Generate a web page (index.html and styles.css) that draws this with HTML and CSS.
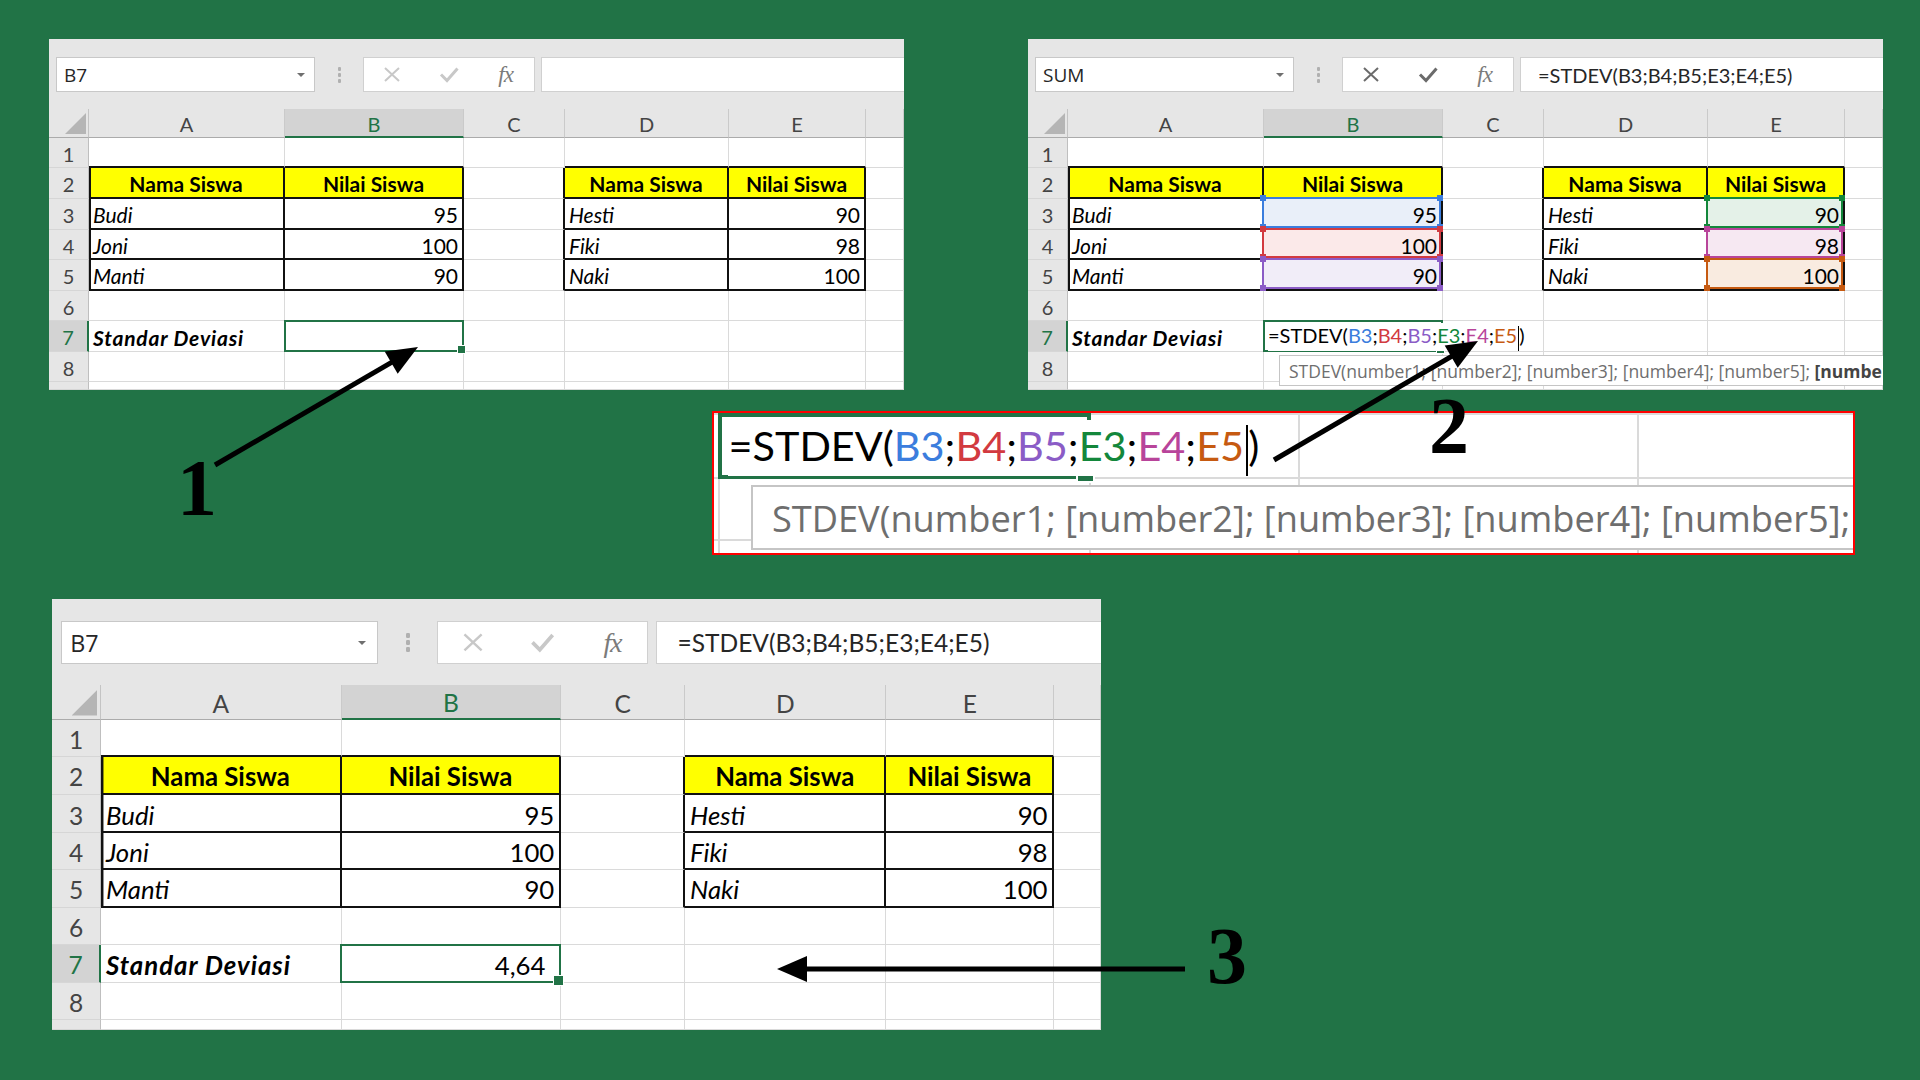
FILE: index.html
```html
<!DOCTYPE html>
<html lang="id">
<head>
<meta charset="utf-8">
<title>STDEV Excel</title>
<link rel="stylesheet" href="styles.css">
</head>
<body>
<div class="top">
  <!-- Panel 1 -->
  <div class="panel">
    <div class="toolbar">
      <div class="namebox"><span>B7</span><i class="dd"></i></div>
      <div class="dots"><i></i><i></i><i></i></div>
      <div class="fxgroup">
        <svg width="18" height="17" viewBox="0 0 18 17"><path class="ico" d="M2 2L16 15M16 2L2 15" stroke-width="2"/></svg>
        <svg width="20" height="17" viewBox="0 0 20 17"><path class="ico" d="M2 8.5l6 6L18.5 2.5" stroke-width="3"/></svg>
        <span class="fx">fx</span>
      </div>
      <div class="fbar"></div>
    </div>
    <div class="sheet">
      <div class="corner"></div><div class="ch">A</div><div class="ch csel">B</div><div class="ch">C</div><div class="ch">D</div><div class="ch">E</div><div class="ch"></div>
      <div class="rh">1</div><div class="ab"></div><div class="ab"></div><div></div><div class="ab"></div><div class="ab"></div><div></div>
      <div class="rh">2</div><div class="t hd bl">Nama Siswa</div><div class="t hd">Nilai Siswa</div><div class="ar"></div><div class="t hd">Nama Siswa</div><div class="t hd">Nilai Siswa</div><div></div>
      <div class="rh">3</div><div class="t nm bl">Budi</div><div class="t num">95</div><div class="ar"></div><div class="t nm">Hesti</div><div class="t num">90</div><div></div>
      <div class="rh">4</div><div class="t nm bl">Joni</div><div class="t num">100</div><div class="ar"></div><div class="t nm">Fiki</div><div class="t num">98</div><div></div>
      <div class="rh">5</div><div class="t nm bl">Manti</div><div class="t num">90</div><div class="ar"></div><div class="t nm">Naki</div><div class="t num">100</div><div></div>
      <div class="rh">6</div><div></div><div></div><div></div><div></div><div></div><div></div>
      <div class="rh rsel">7</div><div class="sd">Standar Deviasi</div><div class="cur"></div><div></div><div></div><div></div><div></div>
      <div class="rh">8</div><div></div><div></div><div></div><div></div><div></div><div></div>
      <div class="rh"></div><div></div><div></div><div></div><div></div><div></div><div></div>
    </div>
  </div>

  <!-- Panel 2 -->
  <div class="panel on">
    <div class="toolbar">
      <div class="namebox"><span>SUM</span><i class="dd"></i></div>
      <div class="dots"><i></i><i></i><i></i></div>
      <div class="fxgroup">
        <svg width="18" height="17" viewBox="0 0 18 17"><path class="ico" d="M2 2L16 15M16 2L2 15" stroke-width="2"/></svg>
        <svg width="20" height="17" viewBox="0 0 20 17"><path class="ico" d="M2 8.5l6 6L18.5 2.5" stroke-width="3"/></svg>
        <span class="fx">fx</span>
      </div>
      <div class="fbar">=STDEV(B3;B4;B5;E3;E4;E5)</div>
    </div>
    <div class="sheet">
      <div class="corner"></div><div class="ch">A</div><div class="ch csel">B</div><div class="ch">C</div><div class="ch">D</div><div class="ch">E</div><div class="ch"></div>
      <div class="rh">1</div><div class="ab"></div><div class="ab"></div><div></div><div class="ab"></div><div class="ab"></div><div></div>
      <div class="rh">2</div><div class="t hd bl">Nama Siswa</div><div class="t hd">Nilai Siswa</div><div class="ar"></div><div class="t hd">Nama Siswa</div><div class="t hd">Nilai Siswa</div><div></div>
      <div class="rh">3</div><div class="t nm bl">Budi</div><div class="t num rg k1">95</div><div class="ar"></div><div class="t nm">Hesti</div><div class="t num rg k4">90</div><div></div>
      <div class="rh">4</div><div class="t nm bl">Joni</div><div class="t num rg k2">100</div><div class="ar"></div><div class="t nm">Fiki</div><div class="t num rg k5">98</div><div></div>
      <div class="rh">5</div><div class="t nm bl">Manti</div><div class="t num rg k3">90</div><div class="ar"></div><div class="t nm">Naki</div><div class="t num rg k6">100</div><div></div>
      <div class="rh">6</div><div></div><div></div><div></div><div></div><div></div><div></div>
      <div class="rh rsel">7</div><div class="sd">Standar Deviasi</div><div class="cur edit"><span class="fm">=STDEV(<span class="x1">B3</span>;<span class="x2">B4</span>;<span class="x3">B5</span>;<span class="x4">E3</span>;<span class="x5">E4</span>;<span class="x6">E5</span><i class="caret"></i>)</span></div><div></div><div></div><div></div><div></div>
      <div class="rh">8</div><div></div><div></div><div></div><div></div><div></div><div></div>
      <div class="rh"></div><div></div><div></div><div></div><div></div><div></div><div></div>
    </div>
    <div class="tip">STDEV(number1; [number2]; [number3]; [number4]; [number5];&nbsp;<b>[number6]</b>; ...)</div>
  </div>
</div>

<!-- Zoomed detail of panel 2 (rows 7-8 of the same sheet, magnified) -->
<div class="zbox">
  <div class="panel on">
    <div class="toolbar"></div>
    <div class="sheet">
      <div class="corner"></div><div class="ch"></div><div class="ch csel"></div><div class="ch"></div><div class="ch"></div><div class="ch"></div><div class="ch"></div>
      <div class="rh"></div><div></div><div></div><div></div><div></div><div></div><div></div>
      <div class="rh"></div><div></div><div></div><div></div><div></div><div></div><div></div>
      <div class="rh"></div><div></div><div></div><div></div><div></div><div></div><div></div>
      <div class="rh"></div><div></div><div></div><div></div><div></div><div></div><div></div>
      <div class="rh"></div><div></div><div></div><div></div><div></div><div></div><div></div>
      <div class="rh"></div><div></div><div></div><div></div><div></div><div></div><div></div>
      <div class="rh rsel"></div><div></div><div class="cur edit"><span class="fm">=STDEV(<span class="x1">B3</span>;<span class="x2">B4</span>;<span class="x3">B5</span>;<span class="x4">E3</span>;<span class="x5">E4</span>;<span class="x6">E5</span><i class="caret"></i>)</span></div><div></div><div></div><div></div><div></div>
      <div class="rh"></div><div></div><div></div><div></div><div></div><div></div><div></div>
      <div class="rh"></div><div></div><div></div><div></div><div></div><div></div><div></div>
    </div>
    <div class="tip">STDEV(number1; [number2]; [number3]; [number4]; [number5];&nbsp;<b>[numbe</b></div>
  </div>
</div>

<!-- Panel 3 -->
<div class="p3wrap">
  <div class="panel">
    <div class="toolbar">
      <div class="namebox"><span>B7</span><i class="dd"></i></div>
      <div class="dots"><i></i><i></i><i></i></div>
      <div class="fxgroup">
        <svg width="18" height="17" viewBox="0 0 18 17"><path class="ico" d="M2 2L16 15M16 2L2 15" stroke-width="2"/></svg>
        <svg width="20" height="17" viewBox="0 0 20 17"><path class="ico" d="M2 8.5l6 6L18.5 2.5" stroke-width="3"/></svg>
        <span class="fx">fx</span>
      </div>
      <div class="fbar">=STDEV(B3;B4;B5;E3;E4;E5)</div>
    </div>
    <div class="sheet">
      <div class="corner"></div><div class="ch">A</div><div class="ch csel">B</div><div class="ch">C</div><div class="ch">D</div><div class="ch">E</div><div class="ch"></div>
      <div class="rh">1</div><div class="ab"></div><div class="ab"></div><div></div><div class="ab"></div><div class="ab"></div><div></div>
      <div class="rh">2</div><div class="t hd bl">Nama Siswa</div><div class="t hd">Nilai Siswa</div><div class="ar"></div><div class="t hd">Nama Siswa</div><div class="t hd">Nilai Siswa</div><div></div>
      <div class="rh">3</div><div class="t nm bl">Budi</div><div class="t num">95</div><div class="ar"></div><div class="t nm">Hesti</div><div class="t num">90</div><div></div>
      <div class="rh">4</div><div class="t nm bl">Joni</div><div class="t num">100</div><div class="ar"></div><div class="t nm">Fiki</div><div class="t num">98</div><div></div>
      <div class="rh">5</div><div class="t nm bl">Manti</div><div class="t num">90</div><div class="ar"></div><div class="t nm">Naki</div><div class="t num">100</div><div></div>
      <div class="rh">6</div><div></div><div></div><div></div><div></div><div></div><div></div>
      <div class="rh rsel">7</div><div class="sd">Standar Deviasi</div><div class="cur num pr">4,64</div><div></div><div></div><div></div><div></div>
      <div class="rh">8</div><div></div><div></div><div></div><div></div><div></div><div></div>
      <div class="rh"></div><div></div><div></div><div></div><div></div><div></div><div></div>
    </div>
  </div>
</div>

<svg class="ann" width="1920" height="1080" viewBox="0 0 1920 1080">
  <g stroke="#000" stroke-width="5">
    <line x1="215" y1="465" x2="395" y2="360.4"/>
    <line x1="1274" y1="460" x2="1455" y2="354.4"/>
    <line x1="1185" y1="969" x2="803" y2="969"/>
  </g>
  <g fill="#000">
    <polygon points="418,347 384.7,351.4 397.7,373.8"/>
    <polygon points="1478,341 1444.7,345.4 1457.7,367.8"/>
    <polygon points="777,969 807,956 807,982"/>
  </g>
  <text x="197" y="515">1</text>
  <text x="1449" y="453">2</text>
  <text x="1227" y="983">3</text>
</svg>
</body>
</html>
```

FILE: styles.css
```css
* { box-sizing: border-box; }
html, body { margin: 0; padding: 0; }
body {
  width: 1920px;
  height: 1080px;
  background: #217346;
  overflow: hidden;
  position: relative;
  font-family: Lato, "Liberation Sans", sans-serif;
}

.top { display: flex; gap: 124px; padding: 39px 0 0 49px; }

.panel {
  width: 855px;
  height: 351px;
  background: #fff;
  overflow: hidden;
  position: relative;
  z-index: 0;
  display: flex;
  flex-direction: column;
  flex: none;
}

/* toolbar */
.toolbar {
  flex: none;
  height: 70px;
  background: #e6e6e6;
  display: flex;
  align-items: flex-start;
  padding: 18px 0 0 7px;
}
.namebox {
  flex: none;
  width: 259px;
  height: 35px;
  background: #fff;
  border: 1px solid #c8c8c8;
  display: flex;
  align-items: center;
  justify-content: space-between;
  padding: 0 9px 0 7px;
  font-family: "Open Sans", sans-serif;
  font-size: 19px;
  color: #262626;
}
.dd {
  width: 0; height: 0;
  border-left: 4px solid transparent;
  border-right: 4px solid transparent;
  border-top: 4px solid #6f6f6f;
}
.dots {
  flex: none;
  width: 48px;
  height: 35px;
  display: flex;
  flex-direction: column;
  align-items: center;
  justify-content: center;
  gap: 2px;
}
.dots i { width: 3px; height: 4px; background: #b0b0b0; border-radius: 1px; }
.fxgroup {
  flex: none;
  width: 172px;
  height: 35px;
  background: #fff;
  border: 1px solid #d0d0d0;
  display: grid;
  grid-template-columns: repeat(3, 1fr);
  align-items: center;
  justify-items: center;
}
.fxgroup svg { display: block; }
.ico { stroke: #c8c8c8; fill: none; }
.on .ico { stroke: #6b6b6b; }
.fx {
  font-family: "Liberation Serif", serif;
  font-style: italic;
  font-size: 23px;
  color: #7b7b7b;
  letter-spacing: -1px;
}
.fbar {
  flex: 1;
  margin-left: 6px;
  height: 35px;
  background: #fff;
  border: 1px solid #d0d0d0;
  border-right: 0;
  padding-left: 17px;
  display: flex;
  align-items: center;
  font-size: 20px;
  color: #262626;
  white-space: nowrap;
}

/* sheet grid */
.sheet {
  flex: none;
  display: grid;
  grid-template-columns: 40px 196px 179px 101px 164px 137px 38px;
  grid-template-rows: 29px 30px 31px 31px 30px 31px 30px 31px 30px 8px;
}
.sheet > div {
  border-right: 1px solid #dadada;
  border-bottom: 1px solid #dadada;
  display: flex;
  align-items: center;
  white-space: nowrap;
  font-size: 21px;
  color: #000;
  padding: 2px 4px 0;
  min-width: 0;
}
.sheet > .corner {
  background: #e6e6e6;
  border-right-color: #c4c4c4;
  border-bottom-color: #ababab;
  position: relative;
}
.sheet > .corner::after {
  content: "";
  position: absolute;
  left: 16px; top: 4px;
  width: 21px; height: 21px;
  background: #b5b5b5;
  clip-path: polygon(100% 0, 100% 100%, 0 100%);
}
.sheet > .ch {
  background: #e6e6e6;
  justify-content: center;
  color: #444;
  font-size: 20px;
  border-right-color: #cacaca;
  border-bottom-color: #ababab;
}
.sheet > .csel {
  background: #d3d3d3;
  color: #217346;
  border-bottom: 2px solid #217346;
}
.sheet > .rh {
  background: #e6e6e6;
  justify-content: center;
  color: #444;
  font-size: 20px;
  border-right-color: #bfbfbf;
  border-bottom-color: #d6d6d6;
  padding: 2px 0 0;
}
.sheet > .rsel {
  background: #d3d3d3;
  color: #217346;
  border-right: 2px solid #217346;
}
.sheet > .ab { border-bottom: 2px solid #111; }
.sheet > .ar { border-right: 2px solid #111; }
.sheet > .t { border-right: 2px solid #111; border-bottom: 2px solid #111; }
.sheet > .bl { box-shadow: inset 2px 0 0 #111; }
.sheet > .hd { background: #ffff00; font-weight: 700; justify-content: center; }
.sheet > .nm { font-style: italic; }
.sheet > .num { justify-content: flex-end; }
.sheet > .pr { padding-right: 12px; }
.sheet > .sd { font-style: italic; font-weight: 700; letter-spacing: 0.8px; }

/* active cell */
.sheet > .cur { position: relative; }
.sheet > .cur::after {
  content: "";
  position: absolute;
  inset: -1px;
  border: 2px solid #217346;
  z-index: 3;
}
.sheet > .cur::before {
  content: "";
  position: absolute;
  right: -3px; bottom: -3px;
  width: 7px; height: 7px;
  background: #217346;
  border: 1px solid #fff;
  z-index: 4;
}

/* coloured reference ranges */
.sheet > .rg { position: relative; background: var(--f); }
.sheet > .rg::after {
  content: "";
  position: absolute;
  top: -2px; left: -2px; right: 0; bottom: 0;
  border: 2px solid var(--k);
  z-index: 1;
}
.sheet > .rg::before {
  content: "";
  position: absolute;
  top: -4px; left: -4px; right: -2px; bottom: -2px;
  z-index: 2;
  background:
    linear-gradient(var(--k), var(--k)) 0 0 / 6px 6px no-repeat,
    linear-gradient(var(--k), var(--k)) 100% 0 / 6px 6px no-repeat,
    linear-gradient(var(--k), var(--k)) 0 100% / 6px 6px no-repeat,
    linear-gradient(var(--k), var(--k)) 100% 100% / 6px 6px no-repeat;
}
.k1 { --k: #3b7ddd; --f: #e9eff9; }
.k2 { --k: #d23a40; --f: #fbe9e9; }
.k3 { --k: #8b5cc6; --f: #f1edf8; }
.k4 { --k: #13873b; --f: #e4f1e8; }
.k5 { --k: #b8449a; --f: #f6e8f2; }
.k6 { --k: #c65a11; --f: #f9ebe0; }

.x1 { color: #3b7ddd; }
.x2 { color: #d23a40; }
.x3 { color: #8b5cc6; }
.x4 { color: #13873b; }
.x5 { color: #b8449a; }
.x6 { color: #c65a11; }

/* in-cell edit text covers the right edge of the active cell border */
.fm {
  white-space: nowrap;
  font-size: 20px;
  background: #fff;
  position: relative;
  z-index: 4;
  padding-right: 2px;
}
.caret {
  display: inline-block;
  width: 1px;
  height: 25px;
  background: #000;
  vertical-align: middle;
  margin-left: 1px;
}

/* function tooltip */
.tip {
  position: absolute;
  left: 251px;
  top: 316px;
  height: 31px;
  width: 760px;
  background: #fff;
  border: 1px solid #c5c5c5;
  padding-left: 9px;
  display: flex;
  align-items: center;
  font-family: "Open Sans", sans-serif;
  font-size: 17.5px;
  color: #6e6e6e;
  white-space: nowrap;
  z-index: 5;
}
.tip b { color: #444; font-weight: 700; }

/* zoomed detail box */
.zbox {
  width: 1143px;
  height: 144px;
  margin: 21px 0 0 712px;
  border: 2px solid #ff0000;
  overflow: hidden;
  background: #fff;
}
.zbox > .panel { zoom: 2.07; margin: -281px 0 0 -233px; }

/* third panel */
.p3wrap { padding: 44px 0 0 52px; }
.p3wrap > .panel { zoom: 1.227; }

/* annotations */
.ann { position: absolute; left: 0; top: 0; z-index: 10; }
.ann text {
  font-family: "Liberation Serif", serif;
  font-weight: 700;
  font-size: 80px;
  text-anchor: middle;
  fill: #000;
}
```
